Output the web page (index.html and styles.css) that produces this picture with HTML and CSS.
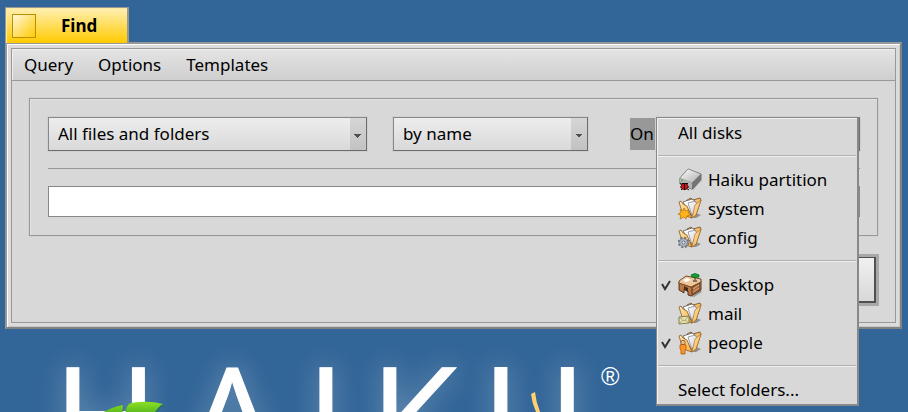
FILE: index.html
```html
<!DOCTYPE html>
<html lang="en">
<head>
<meta charset="utf-8">
<meta name="viewport" content="width=device-width, initial-scale=1">
<title>Find</title>
<link rel="stylesheet" href="styles.css">
</head>
<body>
<svg class="defs" aria-hidden="true">
  <defs>
    <linearGradient id="paper" x1="0" y1="0" x2="1" y2="1"><stop offset="0" stop-color="#fff"/><stop offset="1" stop-color="#c9c9d4"/></linearGradient>
    <linearGradient id="folder" x1="0" y1="0" x2="1" y2="1"><stop offset="0" stop-color="#ffe9b8"/><stop offset="1" stop-color="#f5ae40"/></linearGradient>
    <linearGradient id="metal" x1="0" y1="0" x2="1" y2="1"><stop offset="0" stop-color="#fff"/><stop offset="1" stop-color="#aaa"/></linearGradient>
    <linearGradient id="leaf" x1="0" y1="0" x2="0" y2="1"><stop offset="0" stop-color="#8be022"/><stop offset="1" stop-color="#4fae20"/></linearGradient>
    <filter id="glow" x="-20%" y="-60%" width="140%" height="220%"><feGaussianBlur stdDeviation="13"/></filter>
    <symbol id="i-folder" viewBox="0 0 24 24">
      <path d="M13 21L18 16L23 18L18 21Z" fill="#777" opacity=".75"/>
      <path d="M9 3L13 1L15 3L22 1L23 3L18 18L13 21L9 12Z" fill="#f3bd68" stroke="#704817" stroke-width=".8"/>
      <path d="M5 5L14 2L17 4L14 19Z" fill="#fff" stroke="#55555c" stroke-width=".8"/>
      <path d="M10 6L17 4L19 7L14 19Z" fill="url(#paper)" stroke="#77777c" stroke-width=".7"/>
      <path d="M1 5L3 4L5 7L9 9L14 21L5 18Z" fill="url(#folder)" stroke="#8c5a20" stroke-width=".8"/>
      <path d="M14 21L17 8L23 3L18 18Z" fill="url(#folder)" stroke="#a66a20" stroke-width=".6"/>
    </symbol>
  </defs>
</svg>
<div class="desktop">
  <main class="window">
    <header class="tab">
      <button class="close" type="button" aria-label="Close"></button>
      <h1 class="title">Find</h1>
    </header>
    <div class="frame">
      <div class="client">
        <nav class="menubar">
          <button type="button">Query</button>
          <button type="button">Options</button>
          <button type="button">Templates</button>
        </nav>
        <form class="content">
          <div class="group">
            <div class="row">
              <select class="combo" aria-label="Kind"><option>All files and folders</option></select>
              <select class="combo" aria-label="Search mode"><option>by name</option></select>
              <div class="where">
                <label for="disks">On</label>
                <div class="anchor">
                  <select class="combo" id="disks"><option>Multiple disks</option></select>
                  <div class="popup" role="menu">
                    <button class="item" type="button" role="menuitem">All disks</button>
                    <hr>
                    <button class="item" type="button" role="menuitem">
                      <svg class="icon" viewBox="0 0 24 24">
                        <path d="M11 20L21 10L24 12L15 22Z" fill="#777" opacity=".6"/>
                        <path d="M2 10L10 1L23 6L23 11L14 21L2 16Z" fill="#777" stroke="#444" stroke-width=".8"/>
                        <path d="M2 10L10 1L23 6L14 15Z" fill="url(#metal)" stroke="#888" stroke-width=".5"/>
                        <path d="M2 10L14 15L14 21L2 16Z" fill="#b4b4b4"/>
                        <path d="M14 15L23 6L23 11L14 21Z" fill="#747474"/>
                        <circle cx="4" cy="12.500" r="1" fill="#52c02c"/>
                        <path d="M2 15L5 17M2 19H11M3 22L5 20M10 15L8 17M11 22L8 20" stroke="#111" stroke-width="1"/>
                        <ellipse cx="6.500" cy="18.500" rx="3.500" ry="3.200" fill="#d01420" stroke="#300" stroke-width=".6"/>
                        <path d="M6.500 15V22M4 15.500H9" stroke="#1c0808" stroke-width="1.200"/>
                      </svg>Haiku partition</button>
                    <button class="item" type="button" role="menuitem">
                      <svg class="icon" viewBox="0 0 24 24"><use href="#i-folder"/><path d="M6 11L7.500 14L11 13L10 16L12 18L9 19L8 22L5.500 20L2 22L3 18.500L0 17L3 15.500L2 12.500L5 14Z" fill="#ffb41c" stroke="#b26b04" stroke-width=".7"/></svg>system</button>
                    <button class="item" type="button" role="menuitem">
                      <svg class="icon" viewBox="0 0 24 24"><use href="#i-folder"/><circle cx="5.500" cy="16.500" r="4.600" fill="none" stroke="#6d7583" stroke-width="2.400" stroke-dasharray="2.100 1.500"/><circle cx="5.500" cy="16.500" r="3.900" fill="#b5bfd0" stroke="#6d7583" stroke-width=".7"/><circle cx="5.500" cy="16.500" r="1.500" fill="#eee" stroke="#4d5563" stroke-width=".8"/></svg>config</button>
                    <hr>
                    <button class="item" type="button" role="menuitemcheckbox" aria-checked="true">
                      <svg class="check" viewBox="0 0 12 12"><path d="M2 5L5 10L10 2" fill="none" stroke="#333" stroke-width="2"/></svg>
                      <svg class="icon" viewBox="0 0 24 24">
                        <path d="M12 23L22 17L24 19L16 24Z" fill="#777" opacity=".6"/>
                        <path d="M1 9L13 14L23 8V17L13 23L10 22V18L6 16V20L1 17Z" fill="#b87845" stroke="#4a2b16" stroke-width=".9"/>
                        <path d="M13 14L22 9V17L13 23Z" fill="#8b512e"/>
                        <path d="M15 15L21 11V13L15 17ZM15 18L21 14V16L15 20Z" fill="#d19563"/>
                        <path d="M6 13L10 15V19L6 17Z" fill="#4c2a18"/>
                        <path d="M1 8L8 3L23 6V9L13 14L1 10Z" fill="#f0c79b" stroke="#68401f" stroke-width=".9"/>
                        <path d="M5 7L9 5L13 7L8 9Z" fill="#fff"/>
                        <path d="M17 3V7M15 8H19" stroke="#555" stroke-width="1.300"/>
                        <path d="M13 2Q17-1 21 2L21 4Q17 5 14 4Z" fill="#12a52d" stroke="#075b17" stroke-width=".7"/>
                      </svg>Desktop</button>
                    <button class="item" type="button" role="menuitemcheckbox" aria-checked="false">
                      <svg class="icon" viewBox="0 0 24 24"><use href="#i-folder"/><path d="M1 15L11 14V21L1 22Z" fill="#e7e2ab" stroke="#77744a" stroke-width=".9"/><path d="M1 15L6 19L11 14M1 22L5 18M11 21L7 18" fill="none" stroke="#99956a" stroke-width=".7"/></svg>mail</button>
                    <button class="item" type="button" role="menuitemcheckbox" aria-checked="true">
                      <svg class="check" viewBox="0 0 12 12"><path d="M2 5L5 10L10 2" fill="none" stroke="#333" stroke-width="2"/></svg>
                      <svg class="icon" viewBox="0 0 24 24"><use href="#i-folder"/><path d="M2 14Q5 12 8 14V18L7 19V23H3V19L2 18Z" fill="#ff9426" stroke="#a44b05" stroke-width=".7"/><circle cx="5" cy="11.500" r="2.200" fill="#efba8a" stroke="#744421" stroke-width=".7"/></svg>people</button>
                    <hr>
                    <button class="item" type="button" role="menuitem">Select folders...</button>
                  </div>
                </div>
              </div>
            </div>
            <hr class="rule">
            <input class="query" type="text" aria-label="Name">
          </div>
          <div class="actions"><button class="search" type="submit">Search</button></div>
        </form>
      </div>
    </div>
  </main>
  <svg class="wallpaper" viewBox="0 0 908 83" preserveAspectRatio="xMinYMin meet" role="img" aria-label="Haiku">
    <text class="brand halo" x="53 187 306 370 482" y="141" filter="url(#glow)">HAIKU</text>
    <text class="brand" x="53 187 306 370 482" y="141">HAIKU</text>
    <text class="mark" x="601" y="56">®</text>
    <path d="M102 87Q109 79 124 77L123 87ZM127 87Q128 76 133 75Q149 72 164 77Q159 79 155 87Z" fill="#173" opacity=".4"/>
    <path d="M98 87Q108 79 123 76L122 87ZM125 87Q126 75 131 74Q148 71 163 75Q157 78 153 87Z" fill="url(#leaf)"/>
    <path d="M531 65L535 63Q536 74 541 85H537Q532 75 531 65Z" fill="#ffcf72"/>
  </svg>
</div>
</body>
</html>
```

FILE: styles.css
```css
* { box-sizing: border-box; }

body {
  margin: 0;
  overflow: hidden;
  background: #336698;
  color: #000;
  font: 17px/24px "Noto Sans", "Open Sans", sans-serif;
}

button, select, input { font: inherit; color: inherit; border-radius: 0; margin: 0; }

.defs { position: absolute; width: 0; height: 0; }

.desktop { display: flex; flex-direction: column; min-height: 100vh; }

.window { margin: 7px 6px 0 5px; position: relative; z-index: 1; }

.tab {
  display: flex;
  align-items: center;
  gap: 25px;
  width: fit-content;
  height: 36px;
  padding: 0 30px 0 6px;
  border: 1px solid #989898;
  border-bottom: 0;
  border-right-width: 2px;
  background: linear-gradient(#ffefb3, #ffcb00);
  box-shadow: inset 1px 1px #ffe9a0;
  position: relative;
  z-index: 1;
}

.close {
  width: 24px;
  height: 24px;
  padding: 0;
  border: 1px solid #b89000;
  background: linear-gradient(135deg, #fff8dc, #ffcb00);
}

.title { margin: 0; font-size: 17px; line-height: 24px; font-weight: 700; }

.frame {
  margin-top: -1px;
  padding: 4px;
  border: 2px solid;
  border-color: #989898 #828282 #828282 #989898;
  background: #dcdcdc;
  box-shadow: inset 1px 1px #fff, inset -1px -1px #c8c8c8;
}

.client { border: 1px solid #989898; background: #d8d8d8; }

.menubar {
  display: flex;
  gap: 25px;
  height: 32px;
  padding: 0 12px;
  border-bottom: 1px solid #989898;
  background: linear-gradient(#e4e4e4, #cfcfcf);
  box-shadow: inset 1px 1px #efefef;
}

.menubar button { padding: 0; border: 0; background: none; }

.content { padding: 17px; }

.group {
  padding: 18px 17px 18px 18px;
  border: 1px solid #989898;
  box-shadow: 0 0 0 1px #d2d2d2, inset 1px 1px #e2e2e2;
}

.row {
  display: grid;
  grid-template-columns: minmax(0, 319fr) minmax(0, 195fr) minmax(0, 246fr);
  gap: 26px;
}

.combo {
  appearance: none;
  display: block;
  width: 100%;
  height: 34px;
  padding: 0 24px 0 9px;
  border: 1px solid #888;
  border-right-color: #6c6c6c;
  border-bottom-color: #6c6c6c;
  outline: 1px solid #cfcfcf;
  background:
    linear-gradient(to bottom left, #505050 50%, transparent 50%) right 8px top 16px / 4px 4px no-repeat,
    linear-gradient(to bottom right, #505050 50%, transparent 50%) right 4px top 16px / 4px 4px no-repeat,
    linear-gradient(#d6d6d6, #c2c2c2) right / 16px 100% no-repeat,
    linear-gradient(#ededed, #d9d9d9);
}

.where { display: flex; align-items: center; padding-left: 16px; }
.where label { width: 26px; padding: 4px 0; background: #989898; white-space: nowrap; }

.anchor { position: relative; flex: 1; }

.popup {
  position: absolute;
  top: 0;
  left: 0;
  right: 1px;
  border: 1px solid #888;
  border-right-width: 2px;
  border-bottom-width: 2px;
  background: #d8d8d8;
  box-shadow: inset 1px 1px #f0f0f0;
}

.item {
  position: relative;
  display: flex;
  align-items: center;
  gap: 6px;
  width: 100%;
  height: 29px;
  padding: 0 0 0 21px;
  border: 0;
  background: none;
  white-space: nowrap;
}

.icon { width: 24px; height: 24px; flex: none; }
.check { position: absolute; left: 3px; width: 12px; height: 12px; }

.popup hr {
  height: 2px;
  margin: 8px 1px;
  border: 0;
  border-top: 1px solid #b0b0b0;
  border-bottom: 1px solid #f0f0f0;
}

.rule { height: 1px; margin: 17px 0; border: 0; background: #989898; }

.query {
  display: block;
  width: 100%;
  height: 31px;
  padding: 0 6px;
  border: 1px solid #888;
  background: #fff;
}

.actions { display: flex; justify-content: flex-end; padding: 21px 2px 2px 0; }

.search {
  height: 46px;
  padding: 0 26px;
  border: 1px solid #505050;
  border-width: 1px 2px 2px 1px;
  outline: 3px solid #a8a8a8;
  background: linear-gradient(#f0f0f0, #d8d8d8);
}

.wallpaper { display: block; width: 908px; height: 83px; overflow: visible; }

.brand {
  font: 143px "Open Sans", sans-serif;
  fill: #fff;
  stroke: #fff;
  stroke-width: 1px;
}

.halo { opacity: .28; }

.mark { font: 25px "Liberation Sans", sans-serif; fill: #fff; }
```
